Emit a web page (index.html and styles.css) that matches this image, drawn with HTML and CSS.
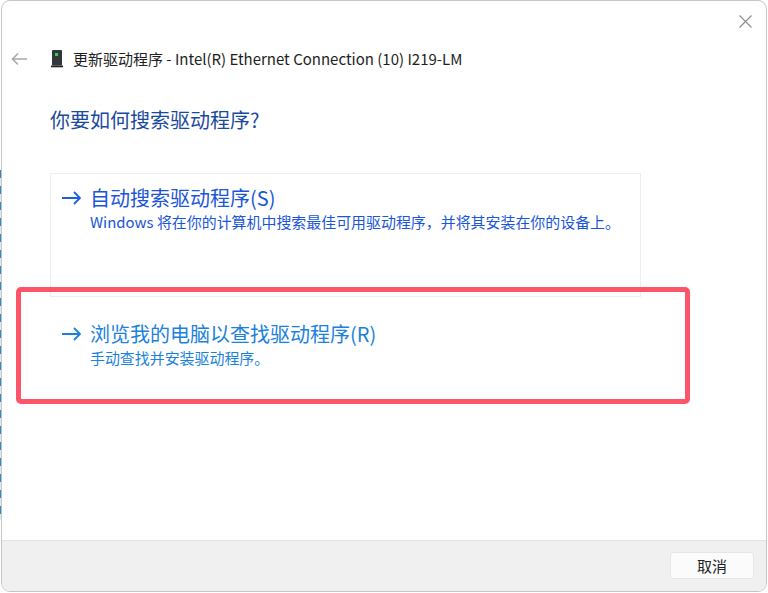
FILE: index.html
```html
<!DOCTYPE html>
<html>
<head>
<meta charset="UTF-8">
<title>更新驱动程序</title>
<link rel="stylesheet" href="styles.css">
</head>
<body>
<div class="dialog">
	<div class="close-row">
		<svg class="close" width="13" height="13" viewBox="0 0 13 13"><path d="M.5.5l12 12M12.500.5l-12 12" stroke="#8a8a8a" stroke-width="1.100" fill="none"/></svg>
	</div>
	<div class="title-row">
		<svg class="back" width="16" height="14" viewBox="0 0 16 14"><path d="M16 7H1.500M7 1.500L1.500 7 7 12.500" stroke="#a9a9a9" stroke-width="1.600" fill="none"/></svg>
		<svg class="nic" width="12" height="18" viewBox="0 0 12 18"><rect x="1" y="0" width="10" height="15.500" rx="1" fill="#33393b"/><rect x="0" y="15.500" width="12" height="1.800" fill="#1f2324"/><rect x="4" y="3" width="3" height="3" fill="#35d04f"/></svg>
		<span class="title">更新驱动程序 - Intel(R) Ethernet Connection (10) I219-LM</span>
	</div>
	<h1 class="heading">你要如何搜索驱动程序?</h1>
	<div class="options">
		<div class="option option-first">
			<svg class="arrow" width="19" height="14" viewBox="0 0 19 14"><path d="M0 7H18M12 1l6 6-6 6" stroke="#1c5fdc" stroke-width="1.800" fill="none"/></svg>
			<div>
				<div class="option-title">自动搜索驱动程序(S)</div>
				<div class="option-desc">Windows 将在你的计算机中搜索最佳可用驱动程序，并将其安装在你的设备上。</div>
			</div>
		</div>
		<div class="option option-second">
			<svg class="arrow" width="19" height="14" viewBox="0 0 19 14"><path d="M0 7H18M12 1l6 6-6 6" stroke="#1a82dc" stroke-width="1.800" fill="none"/></svg>
			<div>
				<div class="option-title">浏览我的电脑以查找驱动程序(R)</div>
				<div class="option-desc">手动查找并安装驱动程序。</div>
			</div>
		</div>
	</div>
	<div class="footer">
		<div class="btn">取消</div>
	</div>
	<div class="mark"></div>
</div>
</body>
</html>
```

FILE: styles.css
```css
html,body{margin:0;padding:0;height:100%;overflow:hidden;}
body{
	background:#fff repeating-linear-gradient(180deg,#2f86bd 0,#2f86bd 8px,#dce9f1 8px,#dce9f1 16px) 0 170px/1px 350px no-repeat;
	font-family:"Noto Sans CJK SC","Noto Sans",sans-serif;
}
.dialog{
	position:relative;
	display:flex;
	flex-direction:column;
	box-sizing:border-box;
	width:766px;
	height:592px;
	margin-left:1px;
	background:#fff;
	border:1px solid #c6c6c6;
	border-radius:9px;
	overflow:hidden;
}
.close-row{
	display:flex;
	justify-content:flex-end;
	height:31px;
	padding:14px 14px 0 0;
	box-sizing:border-box;
}
.title-row{
	display:flex;
	align-items:center;
	height:30px;
	margin-top:12px;
	padding-left:9px;
}
.back{margin-right:24px;}
.nic{margin-right:10px;}
.title{font-size:15px;color:#1e1e1e;margin-bottom:2px;}
.heading{
	margin:29px 0 0 48px;
	font-size:20px;
	line-height:33px;
	font-weight:400;
	color:#1a4a9e;
}
.options{
	margin:37px 0 0 48px;
	width:591px;
}
.option{
	display:flex;
	box-sizing:border-box;
	height:124px;
	padding:10px 0 0 11px;
}
.option-first{
	border:1px solid #eeeeee;
	color:#1a56d8;
}
.option-second{
	padding-left:12px;
	padding-top:23px;
	color:#1a82dc;
}
.arrow{margin:7px 9px 0 0;flex:none;}
.option-title{font-size:20px;line-height:28px;}
.option-desc{font-size:14.950px;line-height:20px;}
.footer{
	display:flex;
	justify-content:flex-end;
	align-items:flex-start;
	margin-top:auto;
	height:51px;
	padding:11px 12px 0 0;
	box-sizing:border-box;
	background:#f0f0f0;
	border-top:1px solid #e4e4e4;
}
.btn{
	width:82px;
	height:25px;
	line-height:25px;
	text-align:center;
	font-size:15px;
	color:#222;
	background:#fbfbfb;
	border:1px solid #e6e6e6;
	border-radius:3px;
}
.mark{
	position:absolute;
	left:14px;
	top:286px;
	width:664px;
	height:107px;
	border:5px solid #fc5468;
	border-radius:5px;
}
```
